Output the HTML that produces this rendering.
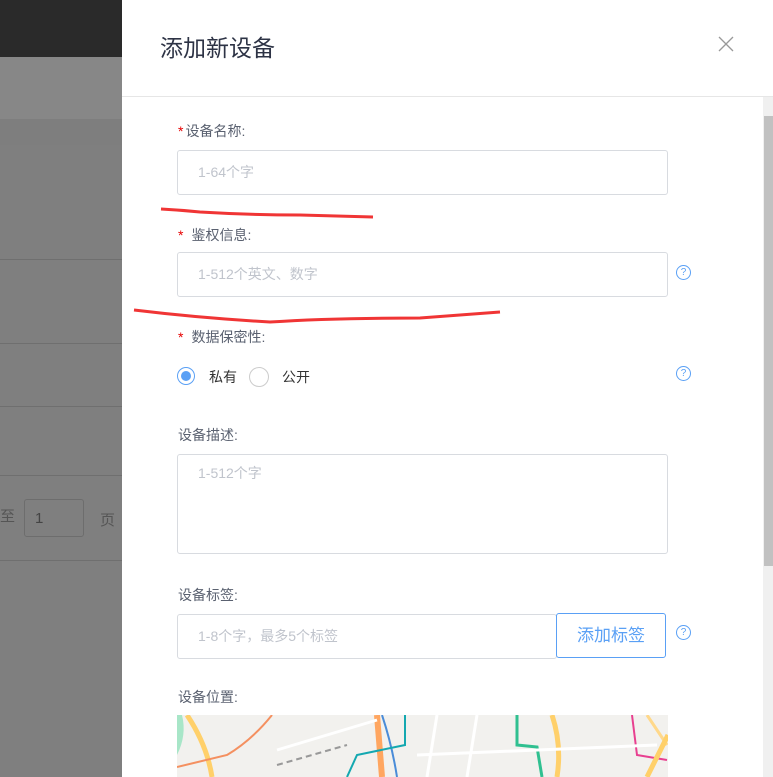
<!DOCTYPE html><html><head><meta charset="utf-8"><style>
body{margin:0;width:773px;height:777px;overflow:hidden;position:relative;background:#7f7f7f;font-family:"Liberation Sans","Noto Sans CJK SC",sans-serif}
.a{position:absolute}
.lbl{position:absolute;left:178px;font-size:14px;color:#5a6170}
.st{color:#e60000;margin-right:8px}
.inp{position:absolute;left:177px;width:491px;border:1px solid #d8dbe0;border-radius:3px;background:#fff;box-sizing:border-box;font-size:14px;color:#c0c4cc;padding-left:20px}
.q{position:absolute;left:676px;width:13px;height:13px;border:1px solid #5aa0f5;border-radius:50%;font-size:10px;color:#5aa0f5;text-align:center;line-height:13px}
</style></head><body>
<div class="a" style="left:0;top:0;width:122px;height:57px;background:#2a2a2a"></div>
<div class="a" style="left:0;top:57px;width:122px;height:62px;background:#878787"></div>
<div class="a" style="left:0;top:119px;width:122px;height:26px;background:#7e7e7e"></div>
<div class="a" style="left:0;top:259px;width:122px;height:1px;background:#6f6f6f"></div>
<div class="a" style="left:0;top:343px;width:122px;height:1px;background:#6f6f6f"></div>
<div class="a" style="left:0;top:406px;width:122px;height:1px;background:#6f6f6f"></div>
<div class="a" style="left:0;top:475px;width:122px;height:1px;background:#6f6f6f"></div>
<div class="a" style="left:0;top:560px;width:122px;height:1px;background:#6f6f6f"></div>
<div class="a" style="left:0;top:505px;font-size:15px;color:#555">至</div>
<div class="a" style="left:24px;top:499px;width:60px;height:38px;border:1px solid #6d6d6d;border-radius:3px;box-sizing:border-box;font-size:15px;color:#444;padding:10px 0 0 10px">1</div>
<div class="a" style="left:100px;top:509px;font-size:15px;color:#555">页</div>
<div class="a" style="left:122px;top:0;width:651px;height:777px;background:#fff"></div>
<div class="a" style="left:160px;top:29px;font-size:23px;color:#2d3345">添加新设备</div>
<svg class="a" style="left:718px;top:36px" width="16" height="16"><path d="M1 1L15 15M15 1L1 15" stroke="#999" stroke-width="1.3"/></svg>
<div class="a" style="left:122px;top:96px;width:651px;height:1px;background:#e6e6e6"></div>
<div class="a" style="left:763px;top:97px;width:10px;height:680px;background:#f0f0f0"></div>
<div class="a" style="left:764px;top:116px;width:9px;height:450px;background:#c1c1c1"></div>
<div class="lbl" style="top:121px"><span class="st" style="margin-right:2px">*</span>设备名称:</div>
<div class="inp" style="top:150px;height:45px;line-height:43px">1-64个字</div>
<div class="lbl" style="top:225px"><span class="st">*</span>鉴权信息:</div>
<div class="inp" style="top:252px;height:45px;line-height:43px">1-512个英文、数字</div>
<div class="q" style="top:265px">?</div>
<div class="lbl" style="top:327px"><span class="st">*</span>数据保密性:</div>
<div class="a" style="left:177px;top:367px;width:18px;height:18px;border:1px solid #5aa0f5;border-radius:50%;box-sizing:border-box"><div class="a" style="left:3px;top:3px;width:10px;height:10px;border-radius:50%;background:#5aa0f5"></div></div>
<div class="a" style="left:209px;top:367px;font-size:14px;color:#333">私有</div>
<div class="a" style="left:249px;top:367px;width:20px;height:20px;border:1px solid #ccc;border-radius:50%;box-sizing:border-box"></div>
<div class="a" style="left:282px;top:367px;font-size:14px;color:#333">公开</div>
<div class="q" style="top:366px">?</div>
<div class="lbl" style="top:425px">设备描述:</div>
<div class="inp" style="top:454px;height:100px;padding-top:8px">1-512个字</div>
<div class="lbl" style="top:585px">设备标签:</div>
<div class="inp" style="top:614px;height:45px;line-height:43px;width:380px">1-8个字，最多5个标签</div>
<div class="a" style="left:556px;top:613px;width:110px;height:45px;border:1px solid #5aa0f5;border-radius:3px;box-sizing:border-box;color:#5aa0f5;font-size:17px;text-align:center;line-height:43px;background:#fff">添加标签</div>
<div class="q" style="top:625px">?</div>
<div class="lbl" style="top:687px">设备位置:</div>
<svg class="a" style="left:177px;top:715px" width="491" height="62">
<rect width="491" height="62" fill="#f2f1ee"/>
<path d="M0 0 L0 40 Q10 20 5 0Z" fill="#a8e6c8"/>
<path d="M10 0 Q30 30 35 62" stroke="#ffd06a" stroke-width="5" fill="none"/>
<path d="M0 52 L50 40 Q75 25 95 0" stroke="#f49060" stroke-width="2" fill="none"/>
<path d="M200 0 L205 62" stroke="#ffa660" stroke-width="6" fill="none"/>
<path d="M205 0 Q215 30 220 62" stroke="#4a8cd8" stroke-width="2" fill="none"/>
<path d="M228 0 L228 30 L180 40 L170 62" stroke="#14a8b0" stroke-width="2" fill="none"/>
<path d="M340 0 L340 30 L360 32 L365 62" stroke="#30c090" stroke-width="3" fill="none"/>
<path d="M375 0 Q385 30 380 62" stroke="#ffd06a" stroke-width="5" fill="none"/>
<path d="M470 0 L490 30" stroke="#ffd88a" stroke-width="3" fill="none"/>
<path d="M455 0 L460 40 L490 45" stroke="#e84090" stroke-width="2" fill="none"/>
<path d="M491 20 L470 62" stroke="#ffd06a" stroke-width="5" fill="none"/>
<path d="M100 35 L200 5 M260 0 L250 62 M300 0 L290 62 M240 40 L480 30" stroke="#fff" stroke-width="3" fill="none"/>
<path d="M100 50 L170 30" stroke="#999" stroke-width="2" stroke-dasharray="6 4" fill="none"/>
</svg>
<svg class="a" style="left:0;top:0" width="773" height="777"><path d="M161 209 Q180 210 200 212 Q250 215 300 215 L373 217" stroke="#f03535" stroke-width="3" fill="none"/><path d="M134 310 Q200 318 270 322 Q330 318 420 318 L500 312" stroke="#f03535" stroke-width="3" fill="none"/></svg>
</body></html>
